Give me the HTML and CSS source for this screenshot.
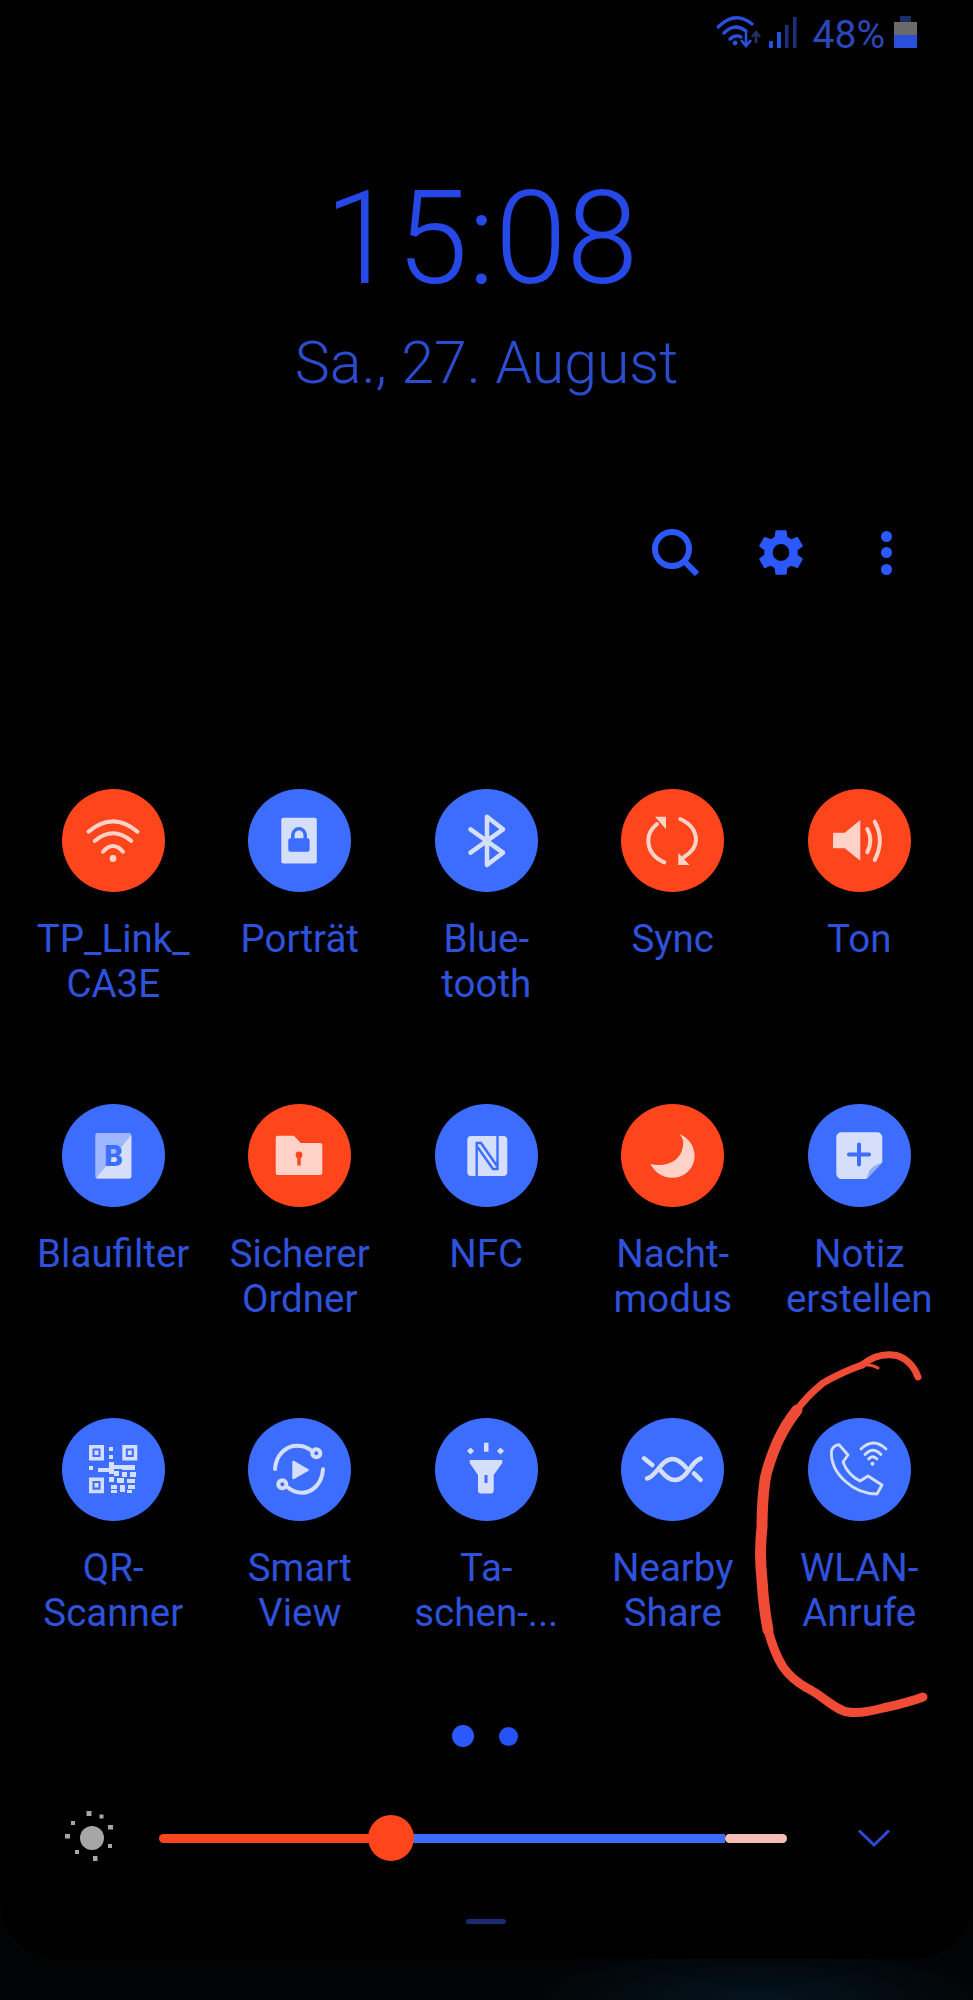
FILE: index.html
```html
<!DOCTYPE html>
<html lang="de">
<head>
    <meta charset="UTF-8">
    <meta name="viewport" content="width=device-width, initial-scale=1.0">
    <title>Schnelleinstellungen</title>
    <link rel="stylesheet" href="styles.css">
</head>
<body>
    <main class="panel">
        <div class="status-bar">
            <svg class="status-net" width="81" height="36" viewBox="0 0 81 36">
                <g class="net-wifi">
                    <path d="M1 12 Q18 -5 35 9"/>
                    <path d="M7 18 Q18 7 29 16"/>
                    <path d="M13 24 Q18 19 24 22"/>
                </g>
                <circle class="net-fill" cx="18" cy="28" r="2.4"/>
                <path class="net-arrow" d="M29 15 V30 M24 25 L29 31 L34 25"/>
                <path class="net-arrow dim" d="M39 28 V18 M35 22 L39 17 L43 22"/>
                <rect class="net-fill" x="52" y="26" width="4" height="7" rx="1"/>
                <rect class="net-fill" x="60" y="17" width="4" height="16" rx="1"/>
                <rect class="net-dim" x="68" y="10" width="3.5" height="23"/>
                <rect class="net-dim" x="76" y="2" width="3.5" height="31"/>
            </svg>
            <span class="status-pct">48%</span>
            <svg class="status-batt" width="23" height="32" viewBox="0 0 23 32">
                <rect x="6" y="0" width="11" height="7" fill="#1d2c66"/>
                <rect x="0" y="6" width="23" height="14" fill="#6b6969"/>
                <rect x="0" y="19" width="23" height="13" rx="1" fill="#2850dc"/>
            </svg>
        </div>

        <div class="clock">15:08</div>
        <div class="date">Sa., 27. August</div>

        <div class="actions">
            <svg width="47" height="47" viewBox="0 0 47 47">
                <circle cx="20" cy="20" r="17" fill="none" stroke="#2b59ff" stroke-width="6"/>
                <path d="M32 32 L45 45" fill="none" stroke="#2b59ff" stroke-width="6"/>
            </svg>
            <svg class="gear" width="44" height="47" viewBox="2.6 1.9 18.8 20.2">
                <path fill="#2b59ff" fill-rule="evenodd" d="M19.14 12.94c.04-.3.06-.61.06-.94s-.02-.64-.07-.94l2.03-1.58a.5.5 0 0 0 .12-.61l-1.92-3.32a.49.49 0 0 0-.59-.22l-2.39.96a7 7 0 0 0-1.62-.94l-.36-2.54a.48.48 0 0 0-.48-.41h-3.84a.47.47 0 0 0-.47.41l-.36 2.54c-.59.24-1.13.57-1.62.94l-2.39-.96a.48.48 0 0 0-.59.22L2.74 8.87a.47.47 0 0 0 .12.61l2.03 1.58c-.05.3-.09.63-.09.94s.02.64.07.94l-2.03 1.58a.5.5 0 0 0-.12.61l1.92 3.32c.12.22.37.29.59.22l2.39-.96c.5.38 1.03.7 1.62.94l.36 2.54c.05.24.24.41.48.41h3.84c.24 0 .44-.17.47-.41l.36-2.54a7 7 0 0 0 1.62-.94l2.39.96c.22.08.47 0 .59-.22l1.92-3.32a.47.47 0 0 0-.12-.61l-2.01-1.58zM12 15.6a3.6 3.6 0 1 1 0-7.2 3.6 3.6 0 0 1 0 7.2z"/>
            </svg>
            <div class="more"><span></span><span></span><span></span></div>
        </div>

        <div class="tiles">
            <div class="tile">
                <div class="tile-icon on">
                    <svg viewBox="0 0 103 103">
                        <g class="line-on">
                            <path d="M26.5 42.7 Q51 22 75.5 42.7"/>
                            <path d="M32.7 52 Q51 36.6 69.3 52"/>
                            <path d="M41 62.7 Q51 51.3 61 62.7"/>
                        </g>
                        <circle class="fill-on" cx="51" cy="69.5" r="3.4"/>
                    </svg>
                </div>
                <div class="tile-label">TP_Link_<br>CA3E</div>
            </div>
            <div class="tile">
                <div class="tile-icon">
                    <svg viewBox="0 0 103 103">
                        <rect class="fill-off" x="33.3" y="28.7" width="35.5" height="45.7" rx="2"/>
                        <rect class="fill-blue" x="40.3" y="49.3" width="21.3" height="13.5" rx="2"/>
                        <path d="M44.8 50 V46 A6.2 6.2 0 0 1 57.2 46 V50" fill="none" stroke="#3d6dff" stroke-width="3.5"/>
                    </svg>
                </div>
                <div class="tile-label">Porträt</div>
            </div>
            <div class="tile">
                <div class="tile-icon">
                    <svg viewBox="0 0 103 103">
                        <path class="line-off" stroke-width="4.5" d="M35.5 40.3 L68 63.7 L52 76 V27.7 L68 40.3 L35.5 63.7"/>
                    </svg>
                </div>
                <div class="tile-label">Blue-<br>tooth</div>
            </div>
            <div class="tile">
                <div class="tile-icon on">
                    <svg viewBox="0 0 103 103">
                        <g class="line-on">
                            <path d="M43.3 73.3 C31 68 27.3 59 27.3 51 C27.3 45 30 40 36 35"/>
                            <path d="M59.3 30 C70 35 75 43 75 51 C75 57 71 63 63 68"/>
                        </g>
                        <path class="fill-on" d="M34 27.7 H45 V40.3 Z M57.3 76 H68.5 L57.3 63.7 Z"/>
                    </svg>
                </div>
                <div class="tile-label">Sync</div>
            </div>
            <div class="tile">
                <div class="tile-icon on">
                    <svg viewBox="0 0 103 103">
                        <path class="fill-on" d="M26 43.7 H36.7 L52.3 31 V71.7 L36.7 59.3 H26 Q25 59.3 25 58 V45 Q25 43.7 26 43.7 Z"/>
                        <g class="line-on">
                            <path d="M59.3 40 Q65.5 51 59.3 63.3"/>
                            <path d="M66.7 32.7 Q77 51 66.7 71"/>
                        </g>
                    </svg>
                </div>
                <div class="tile-label">Ton</div>
            </div>

            <div class="tile">
                <div class="tile-icon">
                    <svg viewBox="0 0 103 103">
                        <rect x="33.3" y="29" width="36" height="45.5" rx="2" fill="#9db6ff"/>
                        <path class="fill-off" d="M69.3 31 V72.5 Q69.3 74.5 67.3 74.5 H34 Z"/>
                        <text class="blue-b" x="51.5" y="61.5">B</text>
                    </svg>
                </div>
                <div class="tile-label">Blaufilter</div>
            </div>
            <div class="tile">
                <div class="tile-icon on">
                    <svg viewBox="0 0 103 103">
                        <path class="fill-on" d="M29.7 31.7 H46 L52.7 39 H72.3 Q74.3 39 74.3 41 V69 Q74.3 71 72.3 71 H29.7 Q27.7 71 27.7 69 V33.7 Q27.7 31.7 29.7 31.7 Z"/>
                        <circle cx="51" cy="51" r="3.4" fill="#ff451c"/>
                        <rect x="49.3" y="51" width="3.4" height="10.5" fill="#ff451c"/>
                    </svg>
                </div>
                <div class="tile-label">Sicherer<br>Ordner</div>
            </div>
            <div class="tile">
                <div class="tile-icon">
                    <svg viewBox="0 0 103 103">
                        <rect class="fill-off" x="32.3" y="32" width="40" height="40" rx="4"/>
                        <path d="M41.7 72 V39 H46 L62 62 M62.5 32 V65 H58 L42.5 43" fill="none" stroke="#3d6dff" stroke-width="2.4"/>
                    </svg>
                </div>
                <div class="tile-label">NFC</div>
            </div>
            <div class="tile">
                <div class="tile-icon on">
                    <svg viewBox="0 0 103 103">
                        <path class="fill-on" d="M58.3 30 C76 37 79 60 64 70 C52 78 36 73 29.3 60 C45 64 60 57 62 42 C63 37 61 33 58.3 30 Z"/>
                    </svg>
                </div>
                <div class="tile-label">Nacht-<br>modus</div>
            </div>
            <div class="tile">
                <div class="tile-icon">
                    <svg viewBox="0 0 103 103">
                        <path class="fill-off" d="M34 28.3 H69 A5 5 0 0 1 74.3 33.3 V58 L58 75 H34 A5.5 5.5 0 0 1 28.3 69.5 V33.3 A5 5 0 0 1 34 28.3 Z"/>
                        <path d="M74 59 L59 75 Q60 62 74 59 Z" fill="#93acf5"/>
                        <path d="M41 50.5 H61 M51 40.5 V60.5" fill="none" stroke="#3d6dff" stroke-width="4" stroke-linecap="round"/>
                    </svg>
                </div>
                <div class="tile-label">Notiz<br>erstellen</div>
            </div>

            <div class="tile">
                <div class="tile-icon">
                    <svg viewBox="0 0 103 103">
                        <g class="fill-off">
                            <path fill-rule="evenodd" d="M27 27 H42 V42.5 H27 Z M30.5 30.5 V39 H38.5 V30.5 Z"/>
                            <rect x="32.5" y="32.5" width="4" height="4.5"/>
                            <path fill-rule="evenodd" d="M60.3 27 H75.3 V42.5 H60.3 Z M63.8 30.5 V39 H71.8 V30.5 Z"/>
                            <rect x="65.8" y="32.5" width="4" height="4.5"/>
                            <path fill-rule="evenodd" d="M27 59.5 H42 V75.3 H27 Z M30.5 63 V71.8 H38.5 V63 Z"/>
                            <rect x="32.5" y="65" width="4" height="4.5"/>
                            <rect x="47" y="29" width="4" height="4"/>
                            <rect x="47" y="37" width="4" height="4"/>
                            <rect x="27" y="48" width="4" height="4"/>
                            <rect x="36" y="50" width="12" height="4"/>
                            <rect x="47" y="44" width="5" height="12"/>
                            <rect x="52" y="47" width="8" height="4"/>
                            <rect x="60" y="47" width="13" height="5"/>
                            <rect x="52" y="53" width="5" height="5"/>
                            <rect x="60" y="54" width="5" height="5"/>
                            <rect x="68" y="54" width="6" height="5"/>
                            <rect x="47" y="59" width="5" height="5"/>
                            <rect x="55" y="60" width="7" height="5"/>
                            <rect x="65" y="61" width="8" height="4"/>
                            <rect x="49" y="67" width="6" height="4"/>
                            <rect x="58" y="67" width="5" height="7"/>
                            <rect x="66" y="67" width="7" height="4"/>
                            <rect x="49" y="72" width="6" height="3"/>
                            <rect x="65" y="72" width="5" height="3"/>
                        </g>
                    </svg>
                </div>
                <div class="tile-label">QR-<br>Scanner</div>
            </div>
            <div class="tile">
                <div class="tile-icon">
                    <svg viewBox="0 0 103 103">
                        <path class="fill-off" stroke="#d5dffc" stroke-width="2" stroke-linejoin="round" d="M45.3 43.7 V60.3 L60 52 Z"/>
                        <g class="line-off" stroke-width="4">
                            <path d="M27 51 C28 37 38 28 48 27.7 C54 27.5 59 29 63.5 32.5"/>
                            <path d="M75 51.3 C74 66 64 74.7 54 74.7 C48 74.7 44 73 40 69.5"/>
                            <circle cx="68.3" cy="35.3" r="4"/>
                            <circle cx="34.3" cy="66.3" r="4"/>
                        </g>
                    </svg>
                </div>
                <div class="tile-label">Smart<br>View</div>
            </div>
            <div class="tile">
                <div class="tile-icon">
                    <svg viewBox="0 0 103 103">
                        <g class="fill-off">
                            <rect x="49" y="24.7" width="4.5" height="9"/>
                            <rect x="33" y="30.5" width="5" height="5" transform="rotate(45 35.5 33)"/>
                            <rect x="63" y="30.5" width="5" height="5" transform="rotate(-45 65.5 33)"/>
                            <path d="M34.7 42 H67.3 V45 L58.7 57 V72.5 Q58.7 75.5 55.7 75.5 H46 Q43 75.5 43 72.5 V57 L34.7 45 Z"/>
                        </g>
                        <rect class="fill-blue" x="49.5" y="57" width="3" height="8"/>
                    </svg>
                </div>
                <div class="tile-label">Ta-<br>schen-...</div>
            </div>
            <div class="tile">
                <div class="tile-icon">
                    <svg viewBox="0 0 103 103">
                        <g class="line-off" stroke-width="4.5">
                            <path d="M26 60.5 C36 58 40 41 51.5 41 C57 41 61 45 65 49.5"/>
                            <path d="M79.7 40.5 C70 43 66 62 54 62 C48 62 44 58 40 53"/>
                            <path d="M73 55.3 L79.7 62"/>
                            <path d="M23 40.3 L31.3 47"/>
                        </g>
                    </svg>
                </div>
                <div class="tile-label">Nearby<br>Share</div>
            </div>
            <div class="tile">
                <div class="tile-icon">
                    <svg viewBox="0 0 103 103">
                        <g class="line-off" stroke-width="2.8">
                            <path d="M31 26.7 L40 37 L35 44 C38 52 44 59 52 63 L60 58 L74 67 L69 76 C45 76 22 55 23.5 33 C24 30 27 27 31 26.7 Z"/>
                            <path d="M53 31 Q65.5 19 78 31"/>
                            <path d="M57 36.5 Q65 28 73 36.5"/>
                            <path d="M60.5 41 Q64.7 36.5 69 41"/>
                        </g>
                        <circle class="fill-off" cx="64.5" cy="45.7" r="2"/>
                    </svg>
                </div>
                <div class="tile-label">WLAN-<br>Anrufe</div>
            </div>
        </div>

        <div class="pager">
            <span class="pager-dot current"></span>
            <span class="pager-dot"></span>
        </div>

        <div class="brightness">
            <svg class="sun" width="60" height="60" viewBox="0 0 60 60">
                <circle cx="30" cy="30" r="12" fill="#a6a6a6"/>
                <g fill="#a6a6a6">
                    <rect x="24.5" y="3" width="5" height="5"/>
                    <rect x="37.5" y="6.5" width="4" height="4"/>
                    <rect x="46" y="17" width="5" height="4.5"/>
                    <rect x="46" y="36" width="4" height="4"/>
                    <rect x="31" y="48" width="4.5" height="5"/>
                    <rect x="13" y="42" width="4" height="4"/>
                    <rect x="3" y="26" width="5" height="4.5"/>
                    <rect x="9" y="13" width="4" height="4"/>
                </g>
            </svg>
            <div class="track">
                <span class="track-red"></span>
                <span class="track-blue"></span>
                <span class="track-pale"></span>
                <span class="thumb"></span>
            </div>
            <svg class="chevron" width="32" height="19" viewBox="0 0 32 19">
                <path d="M1 1.5 L16 16 L31 1.5" fill="none" stroke="#2f4bd8" stroke-width="3"/>
            </svg>
        </div>

        <div class="handle"></div>
    </main>

    <!-- rote Markierung, von Hand drüber gemalt -->
    <svg class="scribble" width="973" height="2000" viewBox="0 0 973 2000">
        <path class="top" d="M918 1377 C914 1366 905 1356 893 1355 C884 1354 873 1356 862 1365"/>
        <path class="thin" d="M862 1365 C868 1364 873 1365 878 1368"/>
        <path class="top" d="M862 1365 C848 1370 835 1376 823 1383 C812 1392 804 1400 797 1410"/>
        <path class="mid" d="M797 1410 C789 1420 782 1432 777 1443 C772 1455 767 1468 765 1480 C763 1495 762 1510 762 1527 C760 1545 760 1562 762 1580 C763 1597 765 1614 768 1630"/>
        <path d="M768 1630 C772 1645 776 1656 783 1667 C790 1677 798 1683 807 1688 C822 1695 835 1710 848 1712 C860 1714 872 1711 883 1708 C897 1705 910 1702 923 1697"/>
    </svg>
</body>
</html>
```

FILE: styles.css
```css
html, body {
    margin: 0;
    height: 2000px;
    overflow: hidden;
}
body {
    position: relative;
    font-family: Roboto, "Noto Sans", sans-serif;
    background: radial-gradient(ellipse 260px 60px at 78% 100%, #04141f, #020304);
}
.panel {
    height: 1959px;
    background-color: #000;
    border-radius: 0 0 60px 60px;
    overflow: hidden;
}

/* status bar */
.status-bar {
    display: flex;
    justify-content: flex-end;
    align-items: flex-start;
    height: 64px;
    padding-right: 56px;
}
.status-net {
    margin-top: 15px;
    margin-right: 15px;
}
.net-wifi path {
    fill: none;
    stroke: #2a50e0;
    stroke-width: 3.4;
    stroke-linecap: round;
}
.net-fill {
    fill: #2a50e0;
}
.net-dim {
    fill: #1c2f78;
}
.net-arrow {
    fill: none;
    stroke: #2a50e0;
    stroke-width: 2.6;
}
.net-arrow.dim {
    stroke: #24325f;
}
.status-pct {
    margin-top: 15px;
    margin-right: 9px;
    font-size: 39px;
    line-height: 40px;
    color: #2c48b8;
}
.status-batt {
    margin-top: 16px;
}

/* clock */
.clock {
    margin-top: 109px;
    padding-right: 10px;
    font-size: 129px;
    font-weight: 300;
    line-height: 132px;
    text-align: center;
    color: #2548e6;
}
.date {
    margin-top: 26px;
    font-size: 59px;
    font-weight: 300;
    line-height: 64px;
    text-align: center;
    color: #2c4ccf;
}

.actions {
    display: flex;
    align-items: center;
    justify-content: flex-end;
    height: 47px;
    margin-top: 134px;
    padding-right: 81px;
}
.gear {
    margin-left: 60px;
}
.more {
    display: flex;
    flex-direction: column;
    gap: 5.5px;
    margin-left: 78px;
}
.more span {
    display: block;
    width: 11px;
    height: 11px;
    border-radius: 50%;
    background-color: #2b59ff;
}

/* tiles */
.tiles {
    display: grid;
    grid-template-columns: repeat(5, 186.5px);
    grid-auto-rows: 218px;
    row-gap: 96.5px;
    margin-top: 213px;
    padding-left: 20px;
}
.tile {
    display: flex;
    flex-direction: column;
    align-items: center;
}
.tile-icon {
    width: 103px;
    height: 103px;
    flex: none;
    border-radius: 50%;
    background-color: #3d6dff;
}
.tile-icon.on {
    background-color: #ff451c;
}
.tile-icon svg {
    display: block;
    width: 103px;
    height: 103px;
}
.tile-label {
    margin-top: 24px;
    font-size: 38.5px;
    line-height: 45px;
    text-align: center;
    white-space: nowrap;
    color: #2f52dc;
}
.line-on path {
    fill: none;
    stroke: #ffd2c8;
    stroke-width: 4;
    stroke-linecap: round;
}
.fill-on {
    fill: #ffd2c8;
}
.line-off {
    fill: none;
    stroke: #d5dffc;
    stroke-linecap: round;
    stroke-linejoin: round;
}
.line-off path, .line-off circle {
    fill: none;
}
.fill-off {
    fill: #d5dffc;
}
.fill-blue {
    fill: #3d6dff;
}
.blue-b {
    font-size: 29px;
    font-weight: 900;
    text-anchor: middle;
    fill: #3d6dff;
}

/* pager */
.pager {
    display: flex;
    align-items: center;
    height: 22px;
    margin-top: 89px;
    padding-left: 452px;
    gap: 25px;
}
.pager-dot {
    display: block;
    width: 19px;
    height: 19px;
    border-radius: 50%;
    background-color: #2352f5;
}
.pager-dot.current {
    width: 22px;
    height: 22px;
    background-color: #2b59ff;
}

/* brightness */
.brightness {
    display: flex;
    align-items: center;
    height: 46px;
    margin-top: 68px;
    padding-left: 62px;
}
.track {
    position: relative;
    display: flex;
    width: 628px;
    height: 9px;
    margin-left: 37px;
    border-radius: 5px;
}
.track-red {
    width: 232px;
    background-color: #ff451c;
    border-radius: 5px 0 0 5px;
}
.track-blue {
    width: 334px;
    background-color: #3d6dff;
}
.track-pale {
    width: 62px;
    background-color: #f6bfb5;
    border-radius: 5px;
}
.thumb {
    position: absolute;
    left: 209px;
    top: -18.5px;
    width: 46px;
    height: 46px;
    border-radius: 50%;
    background-color: #ff451c;
}
.chevron {
    margin-left: 71px;
}
.handle {
    width: 40px;
    height: 5px;
    margin: 58px 0 0 466px;
    border-radius: 3px;
    background-color: #1b2b73;
}

.scribble {
    position: absolute;
    left: 0;
    top: 0;
    pointer-events: none;
}
.scribble path {
    fill: none;
    stroke: #f04b35;
    stroke-width: 9;
    stroke-linecap: round;
    stroke-linejoin: round;
}
.scribble path.top {
    stroke-width: 7;
}
.scribble path.mid {
    stroke-width: 11;
}
.scribble path.thin {
    stroke-width: 3;
}
```
